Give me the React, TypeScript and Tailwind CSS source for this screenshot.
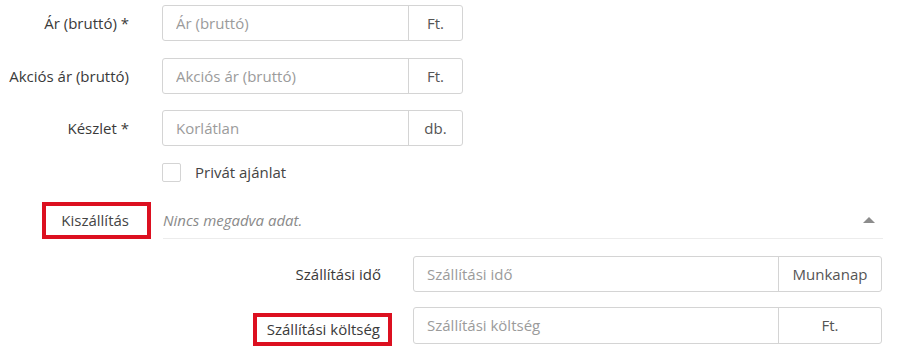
const priceRows = [
  { label: "Ár (bruttó) *", placeholder: "Ár (bruttó)", unit: "Ft.", mt: "mt-[5px]" },
  { label: "Akciós ár (bruttó)", placeholder: "Akciós ár (bruttó)", unit: "Ft.", mt: "mt-[17px]" },
  { label: "Készlet *", placeholder: "Korlátlan", unit: "db.", mt: "mt-4" },
];

const App = () => {
  return (
    <div className="w-[903px] h-[354px] bg-white overflow-hidden font-['Open_Sans',sans-serif] text-[15px] text-[#3a3a3a]">
      {priceRows.map((row, index) => (
        <div key={index} className={`flex items-center h-9 ${row.mt}`}>
          <label className="w-[130px] text-right pr-px">{row.label}</label>
          <div className="ml-8 flex w-[301px] h-9 border border-[#d4d4d4] rounded-[3px]">
            <input
              className="flex-1 min-w-0 px-[13px] outline-none placeholder:text-[#9b9b9b] bg-transparent"
              placeholder={row.placeholder}
            />
            <span className="w-[54px] flex items-center justify-center border-l border-[#d4d4d4] text-[#555]">
              {row.unit}
            </span>
          </div>
        </div>
      ))}

      <div className="flex items-center h-[19px] mt-[17px] pl-[162px]">
        <span className="w-[19px] h-[19px] border border-[#d4d4d4] rounded-[2px]" />
        <span className="ml-[14px] text-[#444]">Privát ajánlat</span>
      </div>

      <div className="flex items-stretch h-[37px] mt-5">
        <div className="w-[151px] pl-[42px]">
          <div className="h-[37px] border-[4px] border-[#dc1020] flex items-center justify-end pr-[18px] text-[#444]">
            Kiszállítás
          </div>
        </div>
        <div className="ml-3 w-[720px] flex items-center justify-between border-b border-[#ececec]">
          <span className="italic text-[#8a8a8a]">Nincs megadva adat.</span>
          <span className="mr-2 w-0 h-0 border-l-[6px] border-r-[6px] border-b-[6px] border-l-transparent border-r-transparent border-b-[#8c8c8c]" />
        </div>
      </div>

      <div className="flex items-center h-9 mt-[17px]">
        <label className="w-[381px] text-right">Szállítási idő</label>
        <div className="ml-8 flex w-[469px] h-9 border border-[#d4d4d4] rounded-[3px]">
          <input
            className="flex-1 min-w-0 px-[13px] outline-none placeholder:text-[#9b9b9b] bg-transparent"
            placeholder="Szállítási idő"
          />
          <span className="w-[103px] flex items-center justify-center border-l border-[#d4d4d4] text-[#555]">
            Munkanap
          </span>
        </div>
      </div>

      <div className="flex items-center h-[37px] mt-[15px]">
        <div className="w-[392px] flex justify-end">
          <label className="mt-2 h-[33px] border-[4px] border-[#dc1020] flex items-center pl-[10px] pr-2">
            Szállítási költség
          </label>
        </div>
        <div className="ml-[21px] flex w-[469px] h-[37px] border border-[#d4d4d4] rounded-[3px]">
          <input
            className="flex-1 min-w-0 px-[13px] outline-none placeholder:text-[#9b9b9b] bg-transparent"
            placeholder="Szállítási költség"
          />
          <span className="w-[103px] flex items-center justify-center border-l border-[#d4d4d4] text-[#555]">
            Ft.
          </span>
        </div>
      </div>
    </div>
  );
};

export default App;
